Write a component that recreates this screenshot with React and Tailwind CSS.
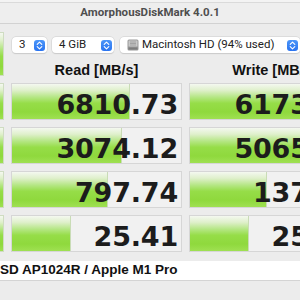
import React from "react";

const green =
  "bg-[linear-gradient(to_bottom,#f4f8f0_0%,#dff0cb_18%,#b4e683_38%,#96dd48_55%,#8fd93d_80%,#9fe052_100%)]";

function Stepper() {
  return (
    <div className="w-[11px] h-[11px] rounded-[3px] bg-[linear-gradient(to_bottom,#4b95f8,#2a74f0)] flex items-center justify-center shrink-0">
      <svg width="7" height="9" viewBox="0 0 7 9" fill="none">
        <path d="M1.2 3.4 L3.5 1.2 L5.8 3.4" stroke="white" strokeWidth="1.1" strokeLinecap="round" strokeLinejoin="round" />
        <path d="M1.2 5.6 L3.5 7.8 L5.8 5.6" stroke="white" strokeWidth="1.1" strokeLinecap="round" strokeLinejoin="round" />
      </svg>
    </div>
  );
}

function Disk() {
  return (
    <svg width="12" height="12" viewBox="0 0 12 12" className="shrink-0">
      <rect x="0.5" y="0.5" width="11" height="11" rx="1.5" fill="#9a9a9a" />
      <rect x="1.5" y="1.5" width="9" height="6" rx="0.5" fill="#c8c8c8" />
      <rect x="1.5" y="8.5" width="9" height="2" fill="#7d7d7d" />
      <line x1="3" y1="3" x2="9" y2="3" stroke="#8a8a8a" strokeWidth="0.6" />
      <line x1="3" y1="4.5" x2="9" y2="4.5" stroke="#8a8a8a" strokeWidth="0.6" />
      <line x1="3" y1="6" x2="9" y2="6" stroke="#8a8a8a" strokeWidth="0.6" />
    </svg>
  );
}

function Cell({ value, fill }) {
  return (
    <div className="relative w-[171px] h-[37px] shrink-0 bg-[#f1f1f1] border border-[#d6d6d6] overflow-hidden">
      <div
        className={`absolute left-0 top-0 bottom-0 ${green} border-r border-[#c9dcb6]`}
        style={{ width: fill }}
      />
      <div className="relative h-full flex items-center justify-end pr-[3px] pt-[5px] font-['DejaVu_Sans',sans-serif] font-bold text-[27px] leading-none text-[#1c1c1c] tracking-[-0.2px]">
        {value}
      </div>
    </div>
  );
}

const rows = [
  ["6810.73", 118, "6173.48", 171],
  ["3074.12", 110, "5065.33", 171],
  ["797.74", 96, "137.29", 77],
  ["25.41", 59, "25.88", 59],
];

export default function App() {
  return (
    <div className="w-[300px] h-[300px] overflow-hidden bg-[#ececec] flex flex-col font-['Liberation_Sans',sans-serif]">
      {/* title bar */}
      <div className="shrink-0 h-[3px] bg-[#f3f3f3] border-b border-[#dadada]" />
      <div className="shrink-0 h-[21px] bg-[#eeeeee] border-b border-[#d2d2d2] flex items-center justify-center">
        <span className="font-['Roboto',sans-serif] font-bold text-[11.5px] text-[#4e4e4e] tracking-[0.05px]">
          AmorphousDiskMark 4.0.1
        </span>
      </div>

      {/* top area */}
      <div className="shrink-0 h-[59px] flex ml-[-56px] gap-[7px] items-start">
        <div className={`w-[60px] h-[44px] mt-[8px] shrink-0 ${green} border border-[#cfdcc2]`} />
        <div className="flex flex-col w-[349px] shrink-0">
          <div className="mt-[13px] h-[16px] flex items-center gap-[5px] pl-[1px]">
            <div className="w-[35px] h-[16px] bg-white rounded-[4px] shadow-[0_0_0_0.5px_#d0d0d0,0_0.5px_1px_#c8c8c8] flex items-center pl-[7px] pr-[2px] justify-between">
              <span className="font-['Roboto',sans-serif] text-[11.5px] text-[#222]">3</span>
              <Stepper />
            </div>
            <div className="w-[62px] h-[16px] bg-white rounded-[4px] shadow-[0_0_0_0.5px_#d0d0d0,0_0.5px_1px_#c8c8c8] flex items-center pl-[7px] pr-[2px] justify-between">
              <span className="font-['Roboto',sans-serif] text-[11.5px] text-[#222]">4 GiB</span>
              <Stepper />
            </div>
            <div className="w-[180px] h-[16px] ml-[1px] bg-white rounded-[4px] shadow-[0_0_0_0.5px_#d0d0d0,0_0.5px_1px_#c8c8c8] flex items-center pl-[7px] pr-[2px] gap-[3px]">
              <Disk />
              <span className="font-['Roboto',sans-serif] text-[11.5px] text-[#222] flex-1 whitespace-nowrap">
                Macintosh HD (94% used)
              </span>
              <Stepper />
            </div>
          </div>
          <div className="mt-[7px] flex gap-[7px]">
            <div className="w-[171px] text-center font-bold text-[14.5px] text-[#111]">Read [MB/s]</div>
            <div className="w-[171px] text-center font-bold text-[14.5px] text-[#111]">Write [MB/s]</div>
          </div>
        </div>
      </div>

      {/* data rows */}
      <div className="shrink-0 flex flex-col gap-[7px]">
        {rows.map(([r, rf, w, wf]) => (
          <div key={r} className="flex ml-[-56px] gap-[7px] h-[37px]">
            <div className={`w-[60px] h-[37px] shrink-0 ${green} border border-[#cfdcc2]`} />
            <Cell value={r} fill={rf} />
            <Cell value={w} fill={wf} />
          </div>
        ))}
      </div>

      {/* bottom */}
      <div className="shrink-0 mt-[9px] h-[20px] bg-white border-b border-[#d4d4d4] flex items-center overflow-hidden">
        <span className="ml-[-9px] whitespace-nowrap font-bold text-[13.5px] text-[#111]">
          SSD AP1024R / Apple M1 Pro
        </span>
      </div>
      <div className="flex-1" />
    </div>
  );
}
